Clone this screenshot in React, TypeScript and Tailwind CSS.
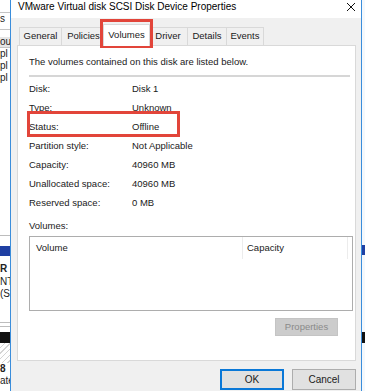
import React from "react";

const rows: [string, string][] = [
  ["Disk:", "Disk 1"],
  ["Type:", "Unknown"],
  ["Status:", "Offline"],
  ["Partition style:", "Not Applicable"],
  ["Capacity:", "40960 MB"],
  ["Unallocated space:", "40960 MB"],
  ["Reserved space:", "0 MB"],
];

const tabs = [
  { label: "General", w: "w-[42px]" },
  { label: "Policies", w: "w-[44px]" },
  { label: "Volumes", w: "w-[43px]", active: true },
  { label: "Driver", w: "w-[39px]" },
  { label: "Details", w: "w-[39px]" },
  { label: "Events", w: "w-[38px]" },
];

// slice of the window behind the dialog, left side
function LeftStrip() {
  return (
    <div className="flex w-[10px] shrink-0 flex-col overflow-hidden bg-white text-[10px] leading-[12px] text-[#222]">
      <div className="h-[12px]" />
      <div className="h-px bg-[#c4c4c4]" />
      <div className="h-[12px] whitespace-nowrap">s</div>
      <div className="h-[4px]" />
      <div className="h-px bg-[#c4c4c4]" />
      <div className="h-[7px]" />
      <div className="h-[10px] whitespace-nowrap bg-[#e6e6e6] leading-[10px]">ou</div>
      <div className="h-px bg-[#c4c4c4]" />
      <div className="h-[12px] whitespace-nowrap">pl</div>
      <div className="h-[12px] whitespace-nowrap">pl</div>
      <div className="h-[12px] whitespace-nowrap">pl</div>
      <div className="h-[151px]" />
      <div className="h-px bg-[#bdbdbd]" />
      <div className="h-[10px]" />
      <div className="h-[10px] bg-[#1f40a3]" />
      <div className="h-[7px]" />
      <div className="h-[13px] whitespace-nowrap font-bold">R</div>
      <div className="h-[12px] whitespace-nowrap">NT</div>
      <div className="h-[12px] whitespace-nowrap">(S</div>
      <div className="h-[22px]" />
      <div className="h-px bg-[#bdbdbd]" />
      <div className="h-[3px]" />
      <div className="h-px bg-[#bdbdbd]" />
      <div className="h-[5px]" />
      <div className="h-[11px] bg-[#111]" />
      <div className="h-[20px] bg-[repeating-linear-gradient(135deg,#fff_0px,#fff_3px,#d4d4d4_3px,#d4d4d4_4px)]" />
      <div className="h-[12px] whitespace-nowrap font-bold">8</div>
      <div className="h-[12px] whitespace-nowrap">ate</div>
    </div>
  );
}

function RightStrip() {
  return (
    <div className="flex w-[3px] shrink-0 flex-col bg-[#f4f8fc]">
      <div className="h-[245px]" />
      <div className="h-[10px] bg-[#1f40a3]" />
      <div className="h-[77px]" />
      <div className="h-[11px] bg-[#111]" />
    </div>
  );
}

function Button({
  children,
  className,
}: {
  children: React.ReactNode;
  className: string;
}) {
  return (
    <div
      className={`flex h-[21px] w-[64px] items-center justify-center bg-[#e1e1e1] text-[10px] ${className}`}
    >
      {children}
    </div>
  );
}

export default function App() {
  return (
    <div className="flex h-[391px] w-[365px] overflow-hidden bg-white font-['Liberation_Sans',Arial,sans-serif] text-[#1a1a1a]">
      <LeftStrip />

      <div className="relative flex w-[352px] shrink-0 flex-col border-x border-[#3a8ddb] bg-[#f0f0f0]">
        {/* title bar */}
        <div className="flex h-[18px] items-start justify-between bg-white pl-[7px] pr-[5px]">
          <span className="text-[10px] leading-[13px] text-black">
            VMware Virtual disk SCSI Disk Device Properties
          </span>
          <svg width="10" height="10" viewBox="0 0 10 10" className="mt-[2px]">
            <path d="M1 1 L9 9 M9 1 L1 9" stroke="#111" strokeWidth="1" />
          </svg>
        </div>

        {/* tabs */}
        <div className="flex h-[27px] items-end pl-[8px] text-[9.5px]">
          {tabs.map((t) =>
            t.active ? (
              <div
                key={t.label}
                className="relative z-10 -mx-[2px] -mb-px flex h-[22px] w-[47px] items-center justify-center border border-b-0 border-[#d9d9d9] bg-white pb-[1px]"
              >
                {t.label}
              </div>
            ) : (
              <div
                key={t.label}
                className={`flex h-[18px] ${t.w} items-center justify-center border border-r-0 border-b-0 border-[#d9d9d9] bg-[#f0f0f0] last:border-r`}
              >
                {t.label}
              </div>
            )
          )}
        </div>

        {/* tab page */}
        <div className="ml-[6px] mr-[5px] flex h-[316px] flex-col border border-[#d9d9d9] bg-white pl-[11px] pr-[2px] text-[9.5px]">
          <p className="mt-[10px] leading-[12px]">
            The volumes contained on this disk are listed below.
          </p>
          <div className="mr-[3px] mt-[7px] h-[2px] bg-[#d6d6d6]" />
          <div className="mt-[3px]">
            {rows.map(([k, v]) => (
              <div key={k} className="flex h-[19px] items-center">
                <span className="w-[103px]">{k}</span>
                <span>{v}</span>
              </div>
            ))}
          </div>
          <p className="mt-[7px] leading-[12px]">Volumes:</p>
          <div className="mt-[4px] h-[75px] w-[324px] border border-[#adadad]">
            <div className="flex h-[22px] items-center">
              <div className="h-full w-[213px] border-r border-[#ececec] pl-[6px] leading-[22px]">
                Volume
              </div>
              <div className="h-full w-[105px] border-r border-[#ececec] pl-[4px] leading-[22px]">
                Capacity
              </div>
            </div>
          </div>
          <div className="mr-[15px] mt-[7px] flex justify-end">
            <div className="flex h-[18px] w-[63px] items-center justify-center border border-[#c4c4c4] bg-[#cccccc] text-[#8a8a8a]">
              Properties
            </div>
          </div>
        </div>

        {/* dialog buttons */}
        <div className="mr-[5px] mt-[8px] flex justify-end gap-[8px]">
          <Button className="border-2 border-[#0a78d7]">OK</Button>
          <Button className="border border-[#adadad]">Cancel</Button>
        </div>

        {/* red annotation boxes */}
        <div className="pointer-events-none absolute left-[89px] top-[19px] h-[29px] w-[53px] border-[3px] border-[#e2453a]" />
        <div className="pointer-events-none absolute left-[16px] top-[111px] h-[26px] w-[153px] border-[3px] border-[#e2453a]" />
      </div>

      <RightStrip />
    </div>
  );
}
